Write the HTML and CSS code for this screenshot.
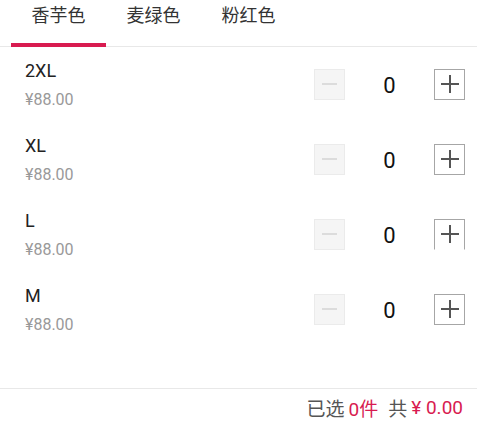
FILE: index.html
```html
<!DOCTYPE html>
<html lang="zh-CN">
<head>
<meta charset="utf-8">
<title>选择规格</title>
<link rel="stylesheet" href="styles.css">
</head>
<body>
<div class="page">
  <nav class="tabs">
    <div class="tab tab--active">香芋色</div>
    <div class="tab">麦绿色</div>
    <div class="tab">粉红色</div>
  </nav>
  <main class="list">
    <div class="row">
      <div class="info"><div class="size">2XL</div><div class="price">¥88.00</div></div>
      <div class="stepper">
        <span class="btn btn--minus"><i class="bar"></i></span>
        <span class="count">0</span>
        <span class="btn btn--plus"><i class="bar"></i><i class="bar bar--v"></i></span>
      </div>
    </div>
    <div class="row">
      <div class="info"><div class="size">XL</div><div class="price">¥88.00</div></div>
      <div class="stepper">
        <span class="btn btn--minus"><i class="bar"></i></span>
        <span class="count">0</span>
        <span class="btn btn--plus"><i class="bar"></i><i class="bar bar--v"></i></span>
      </div>
    </div>
    <div class="row">
      <div class="info"><div class="size">L</div><div class="price">¥88.00</div></div>
      <div class="stepper">
        <span class="btn btn--minus"><i class="bar"></i></span>
        <span class="count">0</span>
        <span class="btn btn--plus btn--open"><i class="bar"></i><i class="bar bar--v"></i></span>
      </div>
    </div>
    <div class="row">
      <div class="info"><div class="size">M</div><div class="price">¥88.00</div></div>
      <div class="stepper">
        <span class="btn btn--minus"><i class="bar"></i></span>
        <span class="count">0</span>
        <span class="btn btn--plus"><i class="bar"></i><i class="bar bar--v"></i></span>
      </div>
    </div>
  </main>
  <footer class="summary">
    <span class="label">已选</span>
    <span class="accent">0件</span>
    <span class="label gap">共</span>
    <span class="accent">¥ 0.00</span>
  </footer>
</div>
</body>
</html>
```
FILE: styles.css
```css
html, body {
  margin: 0;
  padding: 0;
  background: #fff;
}
body {
  font-family: Roboto, "Noto Sans CJK SC", sans-serif;
  color: #222;
}
.page {
  height: 100vh;
  display: flex;
  flex-direction: column;
}
.tabs {
  display: flex;
  height: 47px;
  box-sizing: border-box;
  padding-left: 11px;
  border-bottom: 1px solid #e8e8e8;
}
.tab {
  width: 95px;
  height: 47px;
  box-sizing: border-box;
  margin-bottom: -1px;
  text-align: center;
  font-family: "Noto Sans CJK SC", sans-serif;
  font-size: 18px;
  line-height: 29px;
  color: #333;
}
.tab--active {
  border-bottom: 4px solid #d81b50;
}
.list {
  flex: 1;
}
.row {
  height: 75px;
  box-sizing: border-box;
  padding: 13px 12px 0 25px;
  display: flex;
  justify-content: space-between;
  align-items: flex-start;
}
.size {
  font-size: 18px;
  line-height: 22px;
  color: #222;
}
.price {
  margin-top: 8px;
  font-size: 16px;
  line-height: 19px;
  color: #999;
}
.stepper {
  display: flex;
  align-items: center;
  margin-top: 7px;
}
.btn {
  width: 31px;
  height: 31px;
  box-sizing: border-box;
  display: flex;
  align-items: center;
  justify-content: center;
  position: relative;
}
.btn--minus {
  background: #f5f5f5;
  border: 1px solid #ebebeb;
}
.btn--minus .bar {
  width: 15px;
  height: 2px;
  background: #dcdcdc;
}
.btn--plus {
  background: #fff;
  border: 1px solid #a6a6a6;
}
.btn--open {
  border-bottom-color: transparent;
}
.btn--plus .bar {
  width: 18px;
  height: 2px;
  background: #555;
}
.btn--plus .bar--v {
  position: absolute;
  width: 2px;
  height: 18px;
}
.count {
  width: 89px;
  text-align: center;
  font-size: 22px;
  line-height: 31px;
  padding-top: 3px;
  color: #111;
}
.summary {
  height: 35px;
  box-sizing: border-box;
  border-top: 1px solid #e8e8e8;
  display: flex;
  align-items: center;
  justify-content: flex-end;
  padding: 2px 14px 0 0;
  font-family: Roboto, "Noto Sans CJK SC", sans-serif;
  font-size: 19px;
}
.label {
  color: #555;
  margin-right: 4px;
}
.gap {
  margin-left: 10px;
}
.accent {
  color: #d81b50;
}
```
